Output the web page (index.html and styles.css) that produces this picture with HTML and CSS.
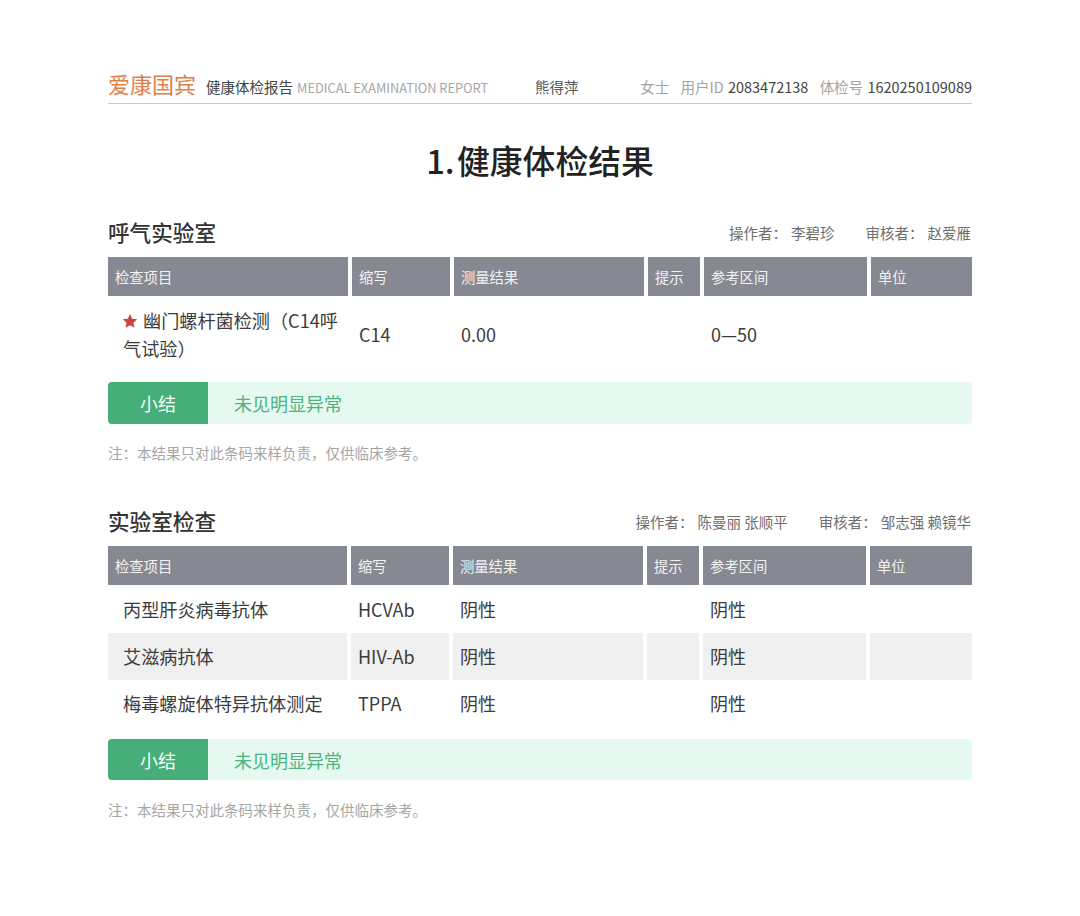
FILE: index.html
```html
<!DOCTYPE html>
<html lang="zh-CN">
<head>
<meta charset="utf-8">
<title>健康体检报告</title>
<link rel="stylesheet" href="styles.css">
</head>
<body>
<main class="page">
  <header class="report-head">
    <span class="brand">爱康国宾</span>
    <span class="report-name">健康体检报告</span>
    <span class="report-en">MEDICAL EXAMINATION REPORT</span>
    <span class="patient">熊得萍</span>
    <span class="info">
      <span class="muted gender">女士</span>
      <span class="muted">用户ID</span> <span class="num uid">2083472138</span>
      <span class="muted">体检号</span> <span class="num">1620250109089</span>
    </span>
  </header>

  <h1 class="title">1. 健康体检结果</h1>

  <section class="section">
    <div class="section-head">
      <h2 class="section-title">呼气实验室</h2>
      <div class="staff">
        <span class="staff-group"><span>操作者：</span><span>李碧珍</span></span>
        <span class="staff-group"><span>审核者：</span><span>赵爱雁</span></span>
      </div>
    </div>
    <div class="grid grid-a grid-head">
      <div class="th">检查项目</div><div class="th">缩写</div><div class="th">测量结果</div><div class="th">提示</div><div class="th">参考区间</div><div class="th">单位</div>
    </div>
    <div class="grid grid-a row-tall">
      <div class="td td-name"><span class="name-text"><svg class="star" viewBox="0 0 24 24" aria-hidden="true"><path d="M12 1.5l3.2 7.1 7.6.8-5.7 5.1 1.6 7.6L12 18.2l-6.7 3.9 1.6-7.6-5.7-5.1 7.6-.8z"/></svg>幽门螺杆菌检测（C14呼气试验）</span></div>
      <div class="td">C14</div><div class="td">0.00</div><div class="td"></div><div class="td">0—50</div><div class="td"></div>
    </div>
    <div class="summary summary-a"><div class="summary-label">小结</div><div class="summary-text">未见明显异常</div></div>
    <p class="note note-a">注：本结果只对此条码来样负责，仅供临床参考。</p>
  </section>

  <section class="section">
    <div class="section-head">
      <h2 class="section-title">实验室检查</h2>
      <div class="staff">
        <span class="staff-group"><span>操作者：</span><span>陈曼丽 张顺平</span></span>
        <span class="staff-group"><span>审核者：</span><span>邹志强 赖镜华</span></span>
      </div>
    </div>
    <div class="grid grid-b grid-head">
      <div class="th">检查项目</div><div class="th">缩写</div><div class="th">测量结果</div><div class="th">提示</div><div class="th">参考区间</div><div class="th">单位</div>
    </div>
    <div class="grid grid-b row">
      <div class="td td-name">丙型肝炎病毒抗体</div><div class="td">HCVAb</div><div class="td">阴性</div><div class="td"></div><div class="td">阴性</div><div class="td"></div>
    </div>
    <div class="grid grid-b row row-alt">
      <div class="td td-name">艾滋病抗体</div><div class="td">HIV-Ab</div><div class="td">阴性</div><div class="td"></div><div class="td">阴性</div><div class="td"></div>
    </div>
    <div class="grid grid-b row">
      <div class="td td-name">梅毒螺旋体特异抗体测定</div><div class="td">TPPA</div><div class="td">阴性</div><div class="td"></div><div class="td">阴性</div><div class="td"></div>
    </div>
    <div class="summary summary-b"><div class="summary-label">小结</div><div class="summary-text">未见明显异常</div></div>
    <p class="note">注：本结果只对此条码来样负责，仅供临床参考。</p>
  </section>
</main>
</body>
</html>
```

FILE: styles.css
```css
* { box-sizing: border-box; }
html, body { margin: 0; padding: 0; background: #fff; }
body {
  font-family: "Noto Sans CJK SC", "Noto Sans", sans-serif;
  color: #333;
}
.page { width: 1080px; padding: 73px 108px 0; }

.report-head {
  display: flex;
  align-items: baseline;
  height: 31px;
  border-bottom: 1px solid #c9c9cc;
  line-height: 20px;
  font-size: 14.5px;
  white-space: nowrap;
}
.brand { width: 98px; font-size: 22px; font-weight: 400; color: #e08048; }
.report-name { width: 91px; color: #444; }
.report-en { width: 238px; font-size: 12.8px; font-weight: 400; color: #a6a6a6; }
.patient { color: #555; }
.info { margin-left: auto; color: #444; }
.muted { margin-right: 1px; color: #a3a3a3; font-weight: 400; }
.gender { margin-right: 8px; }
.uid { margin-right: 8px; }

.title {
  margin: 34px 0 35px;
  height: 44px;
  line-height: 44px;
  text-align: center;
  font-size: 32.8px;
  font-weight: 500;
  color: #222;
  word-spacing: -5px;
}

.section-head {
  display: flex;
  justify-content: space-between;
  align-items: center;
  height: 30px;
  margin-bottom: 10px;
}
.section-title { margin: 0; font-size: 21.6px; font-weight: 500; color: #333; line-height: 30px; }
.staff { display: flex; gap: 31px; padding-right: 1px; font-size: 14.5px; color: #6e6e6e; }
.staff-group { display: flex; gap: 4px; }

.grid { display: grid; column-gap: 4px; }
.grid-a { grid-template-columns: 240px 98px 190px 52px 163px 101px; }
.grid-b { grid-template-columns: 239px 98px 190px 52px 163px 102px; }
.grid-head { height: 39px; margin-bottom: 1px; }

.th {
  display: flex;
  align-items: center;
  padding-left: 7px;
  background: #868992;
  color: #f2f2f2;
  font-size: 14.3px;
}
.td {
  display: flex;
  align-items: center;
  padding: 0 0 2px 7px;
  font-size: 18px;
  color: #3c3c3c;
}
.td-name { padding-left: 15px; padding-right: 5px; font-size: 18.15px; }
.name-text { line-height: 28px; }
.star { width: 16px; height: 16px; margin: 0 5px 0 -1px; vertical-align: -1px; fill: #cf4145; }
.row-tall { height: 76px; }
.row { height: 47px; }
.row-alt .td { background: #f0f0f0; }

.summary {
  display: flex;
  align-items: center;
  border-radius: 4px;
  overflow: hidden;
  background: #e6f9f0;
}
.summary-a { height: 42px; margin-top: 9px; }
.summary-b { height: 41px; margin-top: 12px; }
.summary-label {
  display: flex;
  align-items: center;
  justify-content: center;
  align-self: stretch;
  width: 100px;
  background: #46ae78;
  color: #f4fff9;
  font-size: 18px;
}
.summary-text { padding-left: 26px; font-size: 18px; color: #4cb381; }

.note {
  margin: 20px 0 43px;
  line-height: 20px;
  font-size: 14.5px;
  font-weight: 400;
  color: #a6a6a6;
}
.note-a { margin-top: 19px; }
```
